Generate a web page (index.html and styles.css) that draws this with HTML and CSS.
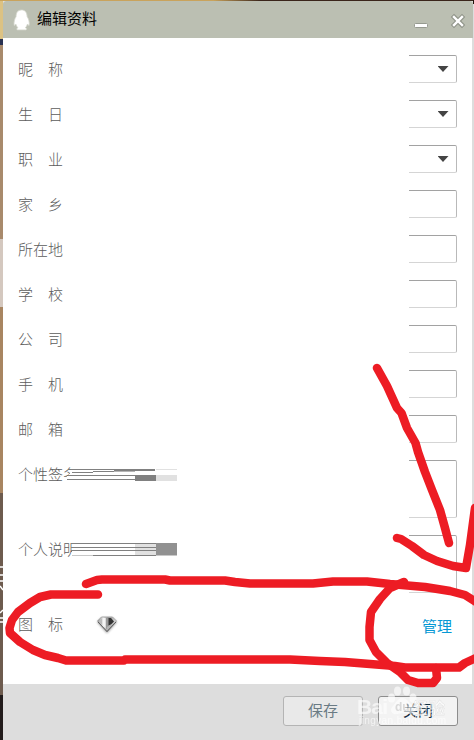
FILE: index.html
```html
<!DOCTYPE html>
<html lang="zh-CN">
<head>
<meta charset="utf-8">
<title>编辑资料</title>
<link rel="stylesheet" href="styles.css">
</head>
<body>
<div class="desktop">
  <svg class="wallpaper" width="3" height="64" viewBox="0 0 3 64" aria-hidden="true"><path d="M0 4h3M0 12h3M0 18h3M0 23l3 4M0 50l3-3M0 55h3M0 59h3"/></svg>
  <main class="window">
    <header class="titlebar">
      <svg class="penguin" width="20" height="24" viewBox="0 0 20 24"><path d="M9.5 2C5.7 2 4.1 4.8 4.1 8.6 2.5 11 1.6 14.5 2.2 17.4c.6 0 1.2-.7 1.7-1.3.3 1.6 1 2.6 2 3.6-1.4.7-1.6 1.8-.3 2.2h8.2c1.2-.5 1-1.5-.4-2.2 1-1 1.6-2 2-3.6.5.7 1 1.3 1.7 1.3.6-3-.4-6.4-2-8.8C15 4.6 13.2 2 9.5 2Z"/></svg>
      <h1>编辑资料</h1>
      <svg class="controls" width="62" height="24" viewBox="0 0 62 24"><rect class="control-edge" x="3.500" y="15.500" width="13" height="4" rx="1"/><path class="x-edge" d="m43 9 8 8m0-8-8 8"/><path class="x-face" d="m43 9 8 8m0-8-8 8"/></svg>
    </header>
    <form class="profile">
      <div class="row"><label>昵　称</label><div class="field"><i class="arrow"></i></div></div>
      <div class="row"><label>生　日</label><div class="field"><i class="arrow"></i></div></div>
      <div class="row"><label>职　业</label><div class="field"><i class="arrow"></i></div></div>
      <div class="row"><label>家　乡</label><div class="field"></div></div>
      <div class="row"><label>所在地</label><div class="field"></div></div>
      <div class="row"><label>学　校</label><div class="field"></div></div>
      <div class="row"><label>公　司</label><div class="field"></div></div>
      <div class="row"><label>手　机</label><div class="field"></div></div>
      <div class="row"><label>邮　箱</label><div class="field"></div></div>
      <div class="row tall">
        <label>个性签名</label>
        <svg class="mask mask-sign" width="111" height="14" viewBox="0 0 111 14" shape-rendering="crispEdges"><path fill="#fff" d="M5 0h106v14H0V9l5-5z"/><path fill="#808080" d="M5 1h84v1H5zM6 4h21v1H6zM27 3h21v1H27zM48 2h41v1H48zM2 7h87v1H2zM1 11h68v1H1zM69 7h21v6H69z"/><path fill="#b5b5b5" d="M48 3h21v1H48z"/><path fill="#e1e1e1" d="M90 1h21v1H90zM90 7h21v6H90z"/></svg>
        <div class="field"></div>
      </div>
      <div class="row tall">
        <label>个人说明</label>
        <svg class="mask mask-note" width="106" height="15" viewBox="0 0 106 15" shape-rendering="crispEdges"><path fill="#fff" d="M1 0h105v15H1z"/><path fill="#e1e1e1" d="M64 1h21v12H64z"/><path fill="#919191" d="M85 1h21v12H85z"/><path fill="#808080" d="M0 1h85v1H0zM0 5h85v1H0zM0 8h85v1H0zM22 13h63v1H22z"/><path fill="#c8c8c8" d="M1 13h21v1H1zM85 13h21v1H85z"/></svg>
        <div class="field"></div>
      </div>
      <div class="row badges">
        <label>图　标</label>
        <svg class="gem" width="22" height="20" viewBox="0 0 22 20">
          <defs><linearGradient id="gem-face" x2="1" y2="0"><stop stop-color="#888"/><stop offset=".3" stop-color="#eee"/><stop offset=".55" stop-color="#999"/><stop offset="1" stop-color="#ddd"/></linearGradient></defs>
          <path d="M1.500 6 5.500 2h11l4 4L11 17z" fill="url(#gem-face)" stroke="#999" stroke-width=".8"/>
          <path d="M2.500 6.500 6 3v7z" fill="#bbb"/><path d="M7 3h2.500v10L7 10z" fill="#f4f4f4"/><path d="M10 3h2v10l-2 1z" fill="#999"/><path d="M12.500 3H15l3 3.500-3 3-2.500 1z" fill="#333"/><path d="m11 12 8-5-8 9z" fill="#b4b4b4"/><path d="m2 7 9 9.500L20 7" fill="none" stroke="#555" stroke-width=".9"/>
        </svg>
        <a class="manage">管理</a>
      </div>
    </form>
    <footer class="actions">
      <button class="save" type="button">保存</button>
      <button class="close" type="button">关闭</button>
    </footer>
  </main>
  <div class="watermark" aria-hidden="true">
    <svg width="120" height="58" viewBox="0 0 120 58">
      <g fill="#fff"><ellipse cx="37.500" cy="16" rx="3.500" ry="4.500"/><ellipse cx="43.500" cy="9" rx="3.500" ry="4.500"/><ellipse cx="52.500" cy="9" rx="3.500" ry="4.500"/><ellipse cx="59" cy="16" rx="3.500" ry="4.500"/><path d="M48 16c-4 0-5 4-9 8-4 4-1 9 4 8l5-1 6 1c6 1 8-5 4-9-4-3-5-7-10-7Z"/></g>
      <text class="wm-brand" x="3" y="32" textLength="31">Bai</text>
      <text class="wm-du" x="41" y="29">du</text>
      <text class="wm-cn" x="58" y="32" textLength="33">经验</text>
      <text class="wm-url" x="5" y="42" textLength="87">jingyan.baidu.com</text>
    </svg>
  </div>
  <svg class="marks" width="474" height="740" viewBox="0 0 474 740">
    <path d="M377 368 387 386 397 408 401.500 413 407 428 415.500 443 418 452 425 472 432 490 440 510 445 528 449 543"/>
    <path d="M397 538 401 539 412 546 424 555 437 561 453 566 466 568 470 545 475 508"/>
    <path d="M86 584 97 580 102 579.500H165L170 580.500H225L235 582 250 583.500H313L333 581.500H367L390 584 425 587 450 591 465 595 476 602"/>
    <path d="M98 594.500H51L40 597 30 603 18 612 12 620 9.500 628 10 633 20 642 33 650 45 655 58 658 66 660.500H124L125 659.500H290L320 661 345 662 370 664 395 666 405 667.500H459L465 663 476 658"/>
    <path d="M404 582 390 588 380 599 371 612 369.500 627V640L376 652 387 663 400 672 408 680 418 683H433L437 678 436 668"/>
  </svg>
</div>
</body>
</html>
```
FILE: styles.css
```css
* { box-sizing: border-box; }
body { margin: 0; overflow: hidden; font: 300 15px/22px "Noto Sans CJK SC", sans-serif; }
.desktop {
  position: relative; width: 474px; height: 740px; padding: 1px 1px 1px 3px;
  background:
    linear-gradient(#20120b, #20120b) 100% 0 / 1px 4px no-repeat,
    linear-gradient(90deg, #c9a35c 45%, #3a251b 55%) 0 0 / 100% 1px no-repeat,
    linear-gradient(#dcc283 0 39px, #293151 39px 45px, #a88a6c 45px 239px, #d4c8bf 239px 307px, #a88561 307px 493px, #6d5b4e 493px 695px, #211b1b 695px) 0 0 / 3px 100% no-repeat,
    #ddd;
}
.wallpaper { position: absolute; left: 0; top: 563px; fill: none; stroke: #fff; stroke-width: 1.5; }
.window { height: 738px; display: flex; flex-direction: column; background: #fff; border-radius: 3px 3px 0 0; overflow: hidden; }
.titlebar { height: 37px; flex: none; display: flex; align-items: center; padding: 0 0 0 9px; background: #bbbfb2; }
.penguin { fill: #fff; stroke: #d5d8ce; stroke-width: .8; }
.titlebar h1 { margin: 0 0 3px 5px; font-size: 15px; font-weight: 400; color: #000; }
.controls { margin-left: auto; }
.control-edge { fill: #fff; stroke: #969a90; }
.x-edge, .x-face { fill: none; stroke-linecap: square; }
.x-edge { stroke: #92968b; stroke-width: 4.6; }
.x-face { stroke: #fff; stroke-width: 2.4; }
.profile { flex: 1; display: flex; flex-direction: column; gap: 17px; padding: 17px 15px 0 15px; border-right: 1px solid #ddd; }
.row { display: flex; height: 28px; flex: none; color: #5c5c5c; }
.row label { margin-top: 3px; height: 22px; white-space: nowrap; }
.field { width: 48px; height: 28px; margin-left: auto; display: flex; justify-content: center; border: solid #b9b9b9; border-width: 1px 1px 1px 0; border-top-color: #a2a2a2; border-bottom-color: #d5d5d5; border-radius: 0 2px 2px 0; }
.arrow { width: 11px; height: 6px; margin: 10px 0 0 21px; background: #444; clip-path: polygon(0 0, 100% 0, 50% 100%); }
.tall, .tall .field { height: 58px; }
.tall label { width: 60px; }
.mask { flex: none; }
.mask-sign { margin: 8px 0 0 -12px; }
.mask-note { margin: 7px 0 0 -7px; }
.gem { margin: 5px 0 0 33px; filter: drop-shadow(0 1px 1px #aaa); }
.manage { margin: 5px 5px 0 auto; color: #0798d4; font-weight: 400; }
.actions { height: 55px; flex: none; display: flex; justify-content: flex-end; gap: 15px; padding: 12px 15px 0 0; background: #ddd; }
.actions button { width: 80px; height: 30px; padding: 0 0 2px; border: 1px solid #b4b4b4; border-radius: 3px; background: #e9e9e9; color: #6a7b84; font: inherit; font-weight: 400; }
.actions .close { border-color: #8d8d8d; background: #f3f3f3; color: #122c3c; }
.watermark { position: absolute; left: 354px; top: 682px; opacity: .65; }
.watermark text { fill: #fff; font-family: "Liberation Sans", "Noto Sans CJK SC", sans-serif; }
.watermark .wm-brand { font-size: 21px; font-weight: 700; }
.watermark .wm-du { font-size: 12px; font-weight: 700; fill: #ccc; }
.watermark .wm-cn { font-size: 16px; font-weight: 700; stroke: #ccc; stroke-width: .3; }
.watermark .wm-url { font-size: 10px; }
.marks { position: absolute; left: 0; top: 0; fill: none; stroke: #ed1c24; stroke-width: 8.5; stroke-linecap: round; stroke-linejoin: round; pointer-events: none; }
```
